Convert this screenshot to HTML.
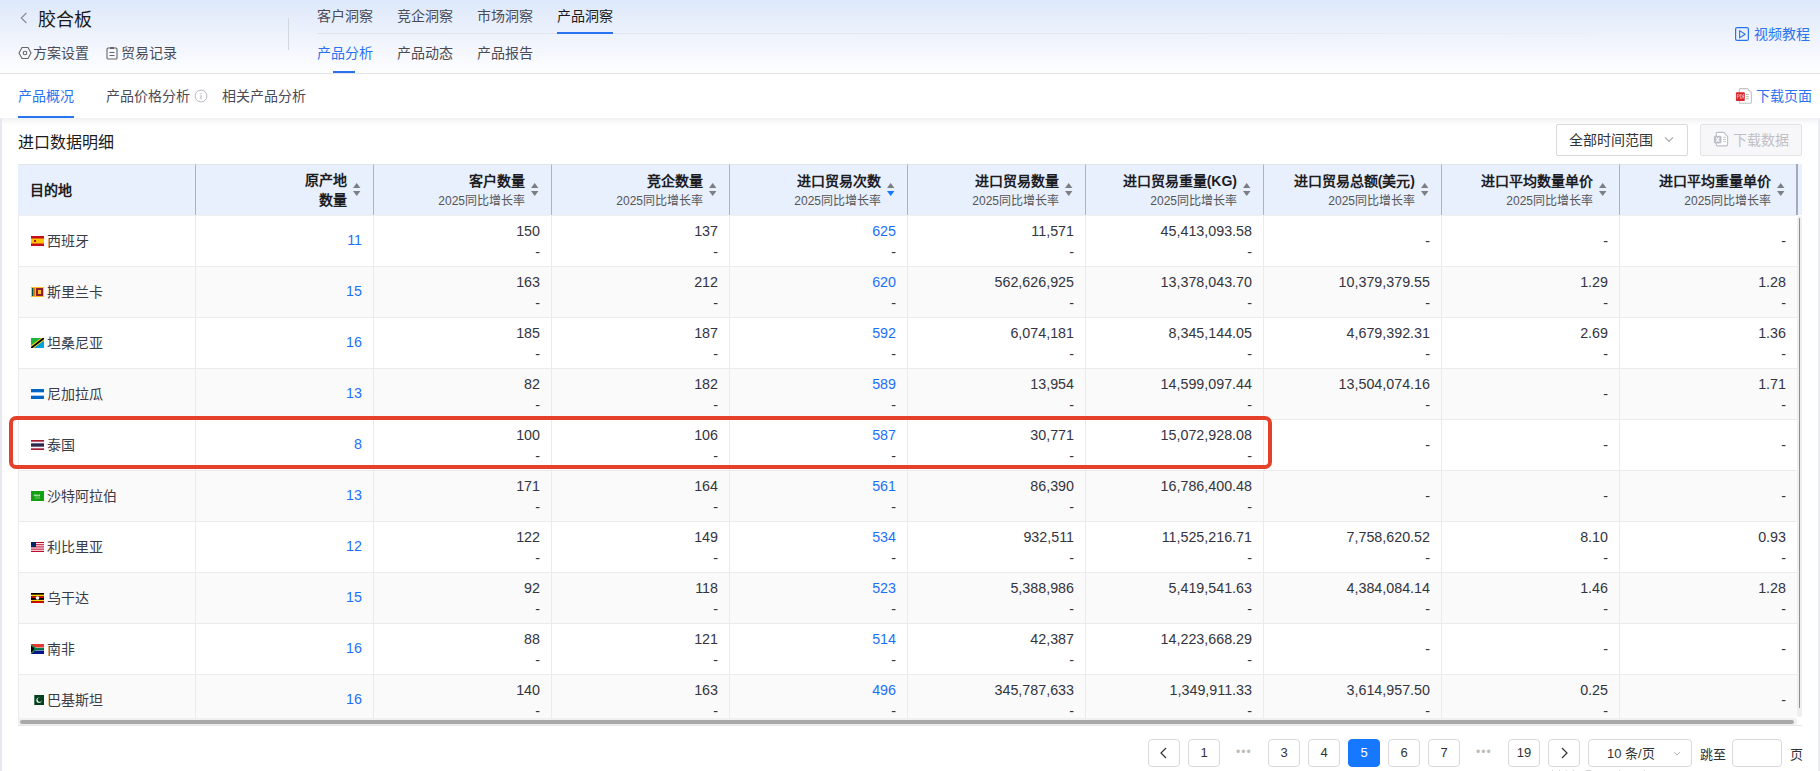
<!DOCTYPE html>
<html lang="zh-CN"><head><meta charset="utf-8"><title>胶合板</title>
<style>
*{box-sizing:border-box;margin:0;padding:0}
html,body{width:1820px;height:771px;overflow:hidden;background:#fff;font-family:"Liberation Sans",sans-serif;color:#333}
.abs{position:absolute;white-space:nowrap}
#top{position:absolute;left:0;top:0;width:1820px;height:74px;background:linear-gradient(#dce8fb 0px,#e5edfb 16px,#edf2fc 34px,#f6f8fe 54px,#fdfeff 73px);border-bottom:1px solid #e2e3e8}
.t14{font-size:14px;line-height:20px}
.nav{color:#4a4a56}
.blue{color:#2a73f0}
#strip-l{position:absolute;left:0;top:118px;width:2px;height:653px;background:#e8e9f0}
#strip-r{position:absolute;left:1818px;top:118px;width:2px;height:653px;background:#eceef3}
#shadow{position:absolute;left:2px;top:118px;width:1816px;height:7px;background:linear-gradient(#f0f1f3,#fbfbfc 75%,#fff)}
.th{position:absolute;top:164px;height:51px;background:#e8effd;border-left:1px solid #aeb3c0;border-top:1px solid #e2e5ec}
.hd{position:absolute;font-size:14px;font-weight:bold;color:#1d1d1f;line-height:20px;white-space:nowrap}
.sub{position:absolute;font-size:12px;color:#555;line-height:16px;white-space:nowrap}
.sort{position:absolute}
.row{position:absolute;left:18px;width:1779px;height:51px;border-bottom:1px solid #ebebeb}
.cell{position:absolute;top:0;height:51px;border-left:1px solid #ebebeb}
.v{position:absolute;font-size:14.3px;line-height:21px;white-space:nowrap;color:#34343e;text-align:right}
.nm{font-size:14px;color:#3a3c48}
.lnk{color:#1c70f8}
.pg{position:absolute;top:739px;width:32px;height:28px;border:1px solid #d9d9d9;border-radius:4px;background:#fff;font-size:13px;line-height:26px;text-align:center;color:#333}
</style></head><body>

<div id="top"></div>
<div style="position:absolute;left:317px;top:33px;width:1380px;height:1px;background:linear-gradient(90deg,#dfe3ee 0%,#e1e5ee 60%,rgba(230,233,240,0) 100%)"></div>
<svg class="abs" style="left:20px;top:12px" width="9" height="12" viewBox="0 0 9 12"><path d="M6.4 1L1.3 6L6.4 11" stroke="#868893" stroke-width="1.1" fill="none"/></svg>
<div class="abs" style="left:38px;top:7px;font-size:18px;line-height:26px;color:#1a1a1a">胶合板</div>
<svg class="abs" style="left:18px;top:46px" width="14" height="14" viewBox="0 0 14 14"><path d="M4 1.5H10L13 7L10 12.5H4L1 7Z" stroke="#666" stroke-width="1.1" fill="none"/><circle cx="7" cy="7" r="1.8" stroke="#666" stroke-width="1.1" fill="none"/></svg>
<div class="abs t14 nav" style="left:33px;top:43px">方案设置</div>
<svg class="abs" style="left:106px;top:46px" width="12" height="14" viewBox="0 0 12 14"><rect x="1" y="2" width="10" height="11" rx="1" stroke="#666" stroke-width="1.1" fill="none"/><path d="M4 1H8V3H4Z" fill="#666"/><path d="M3.5 6.5H8.5M3.5 9.5H8.5" stroke="#666" stroke-width="1.1"/></svg>
<div class="abs t14 nav" style="left:121px;top:43px">贸易记录</div>
<div style="position:absolute;left:288px;top:18px;width:1px;height:32px;background:#d3d6dd"></div>
<div class="abs t14" style="left:317px;top:6px;color:#4a4a56">客户洞察</div>
<div class="abs t14" style="left:397px;top:6px;color:#4a4a56">竞企洞察</div>
<div class="abs t14" style="left:477px;top:6px;color:#4a4a56">市场洞察</div>
<div class="abs t14" style="left:557px;top:6px;color:#1a1a1a">产品洞察</div>
<div style="position:absolute;left:557px;top:32px;width:56px;height:2px;background:#2a73f0"></div>
<div class="abs t14" style="left:317px;top:43px;color:#2a73f0">产品分析</div>
<div class="abs t14" style="left:397px;top:43px;color:#4a4a56">产品动态</div>
<div class="abs t14" style="left:477px;top:43px;color:#4a4a56">产品报告</div>
<div style="position:absolute;left:333px;top:71px;width:22px;height:2px;background:#2a73f0"></div>
<svg class="abs" style="left:1735px;top:27px" width="14" height="14" viewBox="0 0 14 14"><rect x="0.6" y="0.6" width="12.8" height="12.8" rx="1.5" stroke="#2a73f0" stroke-width="1.2" fill="none"/><path d="M4.6 3.6L10.2 7.2L4.6 10.8Z" stroke="#2a73f0" stroke-width="1.1" fill="none" stroke-linejoin="round"/></svg>
<div class="abs t14 blue" style="left:1754px;top:24px">视频教程</div>
<div class="abs t14 blue" style="left:18px;top:86px">产品概况</div>
<div style="position:absolute;left:18px;top:116px;width:56px;height:2px;background:#2a73f0"></div>
<div class="abs t14 nav" style="left:106px;top:86px">产品价格分析</div>
<svg class="abs" style="left:194px;top:89px" width="14" height="14" viewBox="0 0 14 14"><circle cx="7" cy="7" r="5.9" stroke="#b6b8c4" stroke-width="1" fill="none"/><path d="M7 6.2V10.2" stroke="#b6b8c4" stroke-width="1.1"/><path d="M7 4V5" stroke="#b6b8c4" stroke-width="1.1"/></svg>
<div class="abs t14 nav" style="left:222px;top:86px">相关产品分析</div>
<svg class="abs" style="left:1735px;top:88px" width="18" height="16" viewBox="0 0 18 16"><path d="M5.3 0.6H12.3L16.4 4.7V14.2Q16.4 15.2 15.4 15.2H5.3Q4.3 15.2 4.3 14.2V1.6Q4.3 0.6 5.3 0.6Z" fill="#fff" stroke="#c4c4c4" stroke-width="1.1"/><path d="M11 6.5H14M11 8.6H14M11 10.7H14" stroke="#b8b8b8" stroke-width="0.9"/><rect x="0.9" y="4.3" width="8.9" height="8.7" rx="1" fill="#d8252a"/><path d="M2.3 10.5V6.6H3.6Q4.4 6.6 4.4 7.5Q4.4 8.4 3.6 8.4H2.3M5.3 10.5V6.6H6.2Q7.3 6.6 7.3 8.5Q7.3 10.5 6.2 10.5ZM8.2 10.5V6.6H9M8.2 8.5H9" stroke="#fff" stroke-width="0.6" fill="none" opacity="0.85"/></svg>
<div class="abs t14 blue" style="left:1756px;top:86px">下载页面</div>
<div id="strip-l"></div><div id="strip-r"></div><div id="shadow"></div>
<div class="abs" style="left:18px;top:132px;font-size:16px;line-height:22px;color:#1a1a1a">进口数据明细</div>
<div style="position:absolute;left:1556px;top:124px;width:132px;height:32px;border:1px solid #d9d9d9;border-radius:2px;background:#fff"></div>
<div class="abs t14" style="left:1569px;top:130px;color:#333">全部时间范围</div>
<svg class="abs" style="left:1664px;top:136px" width="10" height="7" viewBox="0 0 10 7"><path d="M1 1.4L5 5.4L9 1.4" stroke="#aaa" stroke-width="1.3" fill="none"/></svg>
<div style="position:absolute;left:1700px;top:124px;width:102px;height:32px;border:1px solid #e3e3e6;border-radius:2px;background:#f7f7f9"></div>
<svg class="abs" style="left:1713px;top:131px" width="16" height="16" viewBox="0 0 16 16"><path d="M4.2 1.4H10.6L14.6 5.4V14Q14.6 14.9 13.7 14.9H4.2Q3.3 14.9 3.3 14V2.3Q3.3 1.4 4.2 1.4Z" fill="#fff" stroke="#bcbfca" stroke-width="1.1"/><path d="M10.1 6.3H12.9M10.1 8.5H12.9M10.1 10.6H12.9" stroke="#bcbfca" stroke-width="0.9"/><rect x="0.9" y="4.8" width="7.6" height="7.6" rx="1.3" fill="#bcbfca"/><path d="M3.2 6.6L6.3 10.7M6.3 6.6L3.2 10.7" stroke="#fff" stroke-width="1.1"/></svg>
<div class="abs t14" style="left:1733px;top:130px;color:#bfbfc4">下载数据</div>
<div class="th" style="left:18px;width:177px;border-left:none"></div>
<div class="th" style="left:195px;width:178px"></div>
<div class="th" style="left:373px;width:178px"></div>
<div class="th" style="left:551px;width:178px"></div>
<div class="th" style="left:729px;width:178px"></div>
<div class="th" style="left:907px;width:178px"></div>
<div class="th" style="left:1085px;width:178px"></div>
<div class="th" style="left:1263px;width:178px"></div>
<div class="th" style="left:1441px;width:178px"></div>
<div class="th" style="left:1619px;width:178px"></div>
<div style="position:absolute;left:1797px;top:164px;width:5px;height:51px;background:#e8effd"></div>
<div style="position:absolute;left:18px;top:215px;width:1779px;height:1px;background:#efefef"></div>
<div style="position:absolute;left:1796px;top:164px;width:2px;height:51px;background:#a6aab6"></div>
<div class="hd" style="left:30px;top:180px">目的地</div>
<div class="hd" style="left:305px;top:170px;width:42px;text-align:right">原产地</div>
<div class="hd" style="left:305px;top:190px;width:42px;text-align:right">数量</div>
<svg class="sort" style="left:353px;top:183px" width="8" height="13" viewBox="0 0 8 13"><path d="M3.7 0L7.4 5H0Z" fill="#7c7e84"/><path d="M0 8H7.4L3.7 13Z" fill="#7c7e84"/></svg>
<div class="hd" style="left:325px;top:171px;width:200px;text-align:right">客户数量</div>
<div class="sub" style="left:325px;top:193px;width:200px;text-align:right">2025同比增长率</div>
<svg class="sort" style="left:531px;top:183px" width="8" height="13" viewBox="0 0 8 13"><path d="M3.7 0L7.4 5H0Z" fill="#7c7e84"/><path d="M0 8H7.4L3.7 13Z" fill="#7c7e84"/></svg>
<div class="hd" style="left:503px;top:171px;width:200px;text-align:right">竞企数量</div>
<div class="sub" style="left:503px;top:193px;width:200px;text-align:right">2025同比增长率</div>
<svg class="sort" style="left:709px;top:183px" width="8" height="13" viewBox="0 0 8 13"><path d="M3.7 0L7.4 5H0Z" fill="#7c7e84"/><path d="M0 8H7.4L3.7 13Z" fill="#7c7e84"/></svg>
<div class="hd" style="left:681px;top:171px;width:200px;text-align:right">进口贸易次数</div>
<div class="sub" style="left:681px;top:193px;width:200px;text-align:right">2025同比增长率</div>
<svg class="sort" style="left:887px;top:183px" width="8" height="13" viewBox="0 0 8 13"><path d="M3.7 0L7.4 5H0Z" fill="#7c7e84"/><path d="M0 8H7.4L3.7 13Z" fill="#1677ff"/></svg>
<div class="hd" style="left:859px;top:171px;width:200px;text-align:right">进口贸易数量</div>
<div class="sub" style="left:859px;top:193px;width:200px;text-align:right">2025同比增长率</div>
<svg class="sort" style="left:1065px;top:183px" width="8" height="13" viewBox="0 0 8 13"><path d="M3.7 0L7.4 5H0Z" fill="#7c7e84"/><path d="M0 8H7.4L3.7 13Z" fill="#7c7e84"/></svg>
<div class="hd" style="left:1037px;top:171px;width:200px;text-align:right">进口贸易重量(KG)</div>
<div class="sub" style="left:1037px;top:193px;width:200px;text-align:right">2025同比增长率</div>
<svg class="sort" style="left:1243px;top:183px" width="8" height="13" viewBox="0 0 8 13"><path d="M3.7 0L7.4 5H0Z" fill="#7c7e84"/><path d="M0 8H7.4L3.7 13Z" fill="#7c7e84"/></svg>
<div class="hd" style="left:1215px;top:171px;width:200px;text-align:right">进口贸易总额(美元)</div>
<div class="sub" style="left:1215px;top:193px;width:200px;text-align:right">2025同比增长率</div>
<svg class="sort" style="left:1421px;top:183px" width="8" height="13" viewBox="0 0 8 13"><path d="M3.7 0L7.4 5H0Z" fill="#7c7e84"/><path d="M0 8H7.4L3.7 13Z" fill="#7c7e84"/></svg>
<div class="hd" style="left:1393px;top:171px;width:200px;text-align:right">进口平均数量单价</div>
<div class="sub" style="left:1393px;top:193px;width:200px;text-align:right">2025同比增长率</div>
<svg class="sort" style="left:1599px;top:183px" width="8" height="13" viewBox="0 0 8 13"><path d="M3.7 0L7.4 5H0Z" fill="#7c7e84"/><path d="M0 8H7.4L3.7 13Z" fill="#7c7e84"/></svg>
<div class="hd" style="left:1571px;top:171px;width:200px;text-align:right">进口平均重量单价</div>
<div class="sub" style="left:1571px;top:193px;width:200px;text-align:right">2025同比增长率</div>
<svg class="sort" style="left:1777px;top:183px" width="8" height="13" viewBox="0 0 8 13"><path d="M3.7 0L7.4 5H0Z" fill="#7c7e84"/><path d="M0 8H7.4L3.7 13Z" fill="#7c7e84"/></svg>
<div class="row" style="top:216px;background:#fff"></div>
<div style="position:absolute;left:195px;top:216px;width:1px;height:51px;background:#ebebeb"></div>
<div style="position:absolute;left:373px;top:216px;width:1px;height:51px;background:#ebebeb"></div>
<div style="position:absolute;left:551px;top:216px;width:1px;height:51px;background:#ebebeb"></div>
<div style="position:absolute;left:729px;top:216px;width:1px;height:51px;background:#ebebeb"></div>
<div style="position:absolute;left:907px;top:216px;width:1px;height:51px;background:#ebebeb"></div>
<div style="position:absolute;left:1085px;top:216px;width:1px;height:51px;background:#ebebeb"></div>
<div style="position:absolute;left:1263px;top:216px;width:1px;height:51px;background:#ebebeb"></div>
<div style="position:absolute;left:1441px;top:216px;width:1px;height:51px;background:#ebebeb"></div>
<div style="position:absolute;left:1619px;top:216px;width:1px;height:51px;background:#ebebeb"></div>
<div class="abs" style="left:31px;top:236px;line-height:0"><svg width="13" height="10"><rect width="13" height="10" fill="#c60b1e"/><rect y="2.5" width="13" height="5" fill="#ffc400"/><rect x="3" y="4" width="2" height="2" fill="#ad1519"/></svg></div>
<div class="v nm" style="left:47px;top:231px;text-align:left">西班牙</div>
<div class="v lnk" style="left:162px;width:200px;top:230px">11</div>
<div class="v" style="left:340px;width:200px;top:220.5px">150</div>
<div class="v" style="left:340px;width:200px;top:241.5px">-</div>
<div class="v" style="left:518px;width:200px;top:220.5px">137</div>
<div class="v" style="left:518px;width:200px;top:241.5px">-</div>
<div class="v lnk" style="left:696px;width:200px;top:220.5px">625</div>
<div class="v" style="left:696px;width:200px;top:241.5px">-</div>
<div class="v" style="left:874px;width:200px;top:220.5px">11,571</div>
<div class="v" style="left:874px;width:200px;top:241.5px">-</div>
<div class="v" style="left:1052px;width:200px;top:220.5px">45,413,093.58</div>
<div class="v" style="left:1052px;width:200px;top:241.5px">-</div>
<div class="v" style="left:1230px;width:200px;top:231px">-</div>
<div class="v" style="left:1408px;width:200px;top:231px">-</div>
<div class="v" style="left:1586px;width:200px;top:231px">-</div>
<div class="row" style="top:267px;background:#fafafa"></div>
<div style="position:absolute;left:195px;top:267px;width:1px;height:51px;background:#ebebeb"></div>
<div style="position:absolute;left:373px;top:267px;width:1px;height:51px;background:#ebebeb"></div>
<div style="position:absolute;left:551px;top:267px;width:1px;height:51px;background:#ebebeb"></div>
<div style="position:absolute;left:729px;top:267px;width:1px;height:51px;background:#ebebeb"></div>
<div style="position:absolute;left:907px;top:267px;width:1px;height:51px;background:#ebebeb"></div>
<div style="position:absolute;left:1085px;top:267px;width:1px;height:51px;background:#ebebeb"></div>
<div style="position:absolute;left:1263px;top:267px;width:1px;height:51px;background:#ebebeb"></div>
<div style="position:absolute;left:1441px;top:267px;width:1px;height:51px;background:#ebebeb"></div>
<div style="position:absolute;left:1619px;top:267px;width:1px;height:51px;background:#ebebeb"></div>
<div class="abs" style="left:31px;top:287px;line-height:0"><svg width="13" height="10"><rect width="13" height="10" fill="#ffbe29"/><rect x="1" y="1" width="1.5" height="8" fill="#00534e"/><rect x="2.5" y="1" width="1.5" height="8" fill="#eb7400"/><rect x="5" y="1" width="7" height="8" fill="#8d2029"/><rect x="7" y="3" width="3" height="4" fill="#ffbe29"/></svg></div>
<div class="v nm" style="left:47px;top:282px;text-align:left">斯里兰卡</div>
<div class="v lnk" style="left:162px;width:200px;top:281px">15</div>
<div class="v" style="left:340px;width:200px;top:271.5px">163</div>
<div class="v" style="left:340px;width:200px;top:292.5px">-</div>
<div class="v" style="left:518px;width:200px;top:271.5px">212</div>
<div class="v" style="left:518px;width:200px;top:292.5px">-</div>
<div class="v lnk" style="left:696px;width:200px;top:271.5px">620</div>
<div class="v" style="left:696px;width:200px;top:292.5px">-</div>
<div class="v" style="left:874px;width:200px;top:271.5px">562,626,925</div>
<div class="v" style="left:874px;width:200px;top:292.5px">-</div>
<div class="v" style="left:1052px;width:200px;top:271.5px">13,378,043.70</div>
<div class="v" style="left:1052px;width:200px;top:292.5px">-</div>
<div class="v" style="left:1230px;width:200px;top:271.5px">10,379,379.55</div>
<div class="v" style="left:1230px;width:200px;top:292.5px">-</div>
<div class="v" style="left:1408px;width:200px;top:271.5px">1.29</div>
<div class="v" style="left:1408px;width:200px;top:292.5px">-</div>
<div class="v" style="left:1586px;width:200px;top:271.5px">1.28</div>
<div class="v" style="left:1586px;width:200px;top:292.5px">-</div>
<div class="row" style="top:318px;background:#fff"></div>
<div style="position:absolute;left:195px;top:318px;width:1px;height:51px;background:#ebebeb"></div>
<div style="position:absolute;left:373px;top:318px;width:1px;height:51px;background:#ebebeb"></div>
<div style="position:absolute;left:551px;top:318px;width:1px;height:51px;background:#ebebeb"></div>
<div style="position:absolute;left:729px;top:318px;width:1px;height:51px;background:#ebebeb"></div>
<div style="position:absolute;left:907px;top:318px;width:1px;height:51px;background:#ebebeb"></div>
<div style="position:absolute;left:1085px;top:318px;width:1px;height:51px;background:#ebebeb"></div>
<div style="position:absolute;left:1263px;top:318px;width:1px;height:51px;background:#ebebeb"></div>
<div style="position:absolute;left:1441px;top:318px;width:1px;height:51px;background:#ebebeb"></div>
<div style="position:absolute;left:1619px;top:318px;width:1px;height:51px;background:#ebebeb"></div>
<div class="abs" style="left:31px;top:338px;line-height:0"><svg width="13" height="10"><rect width="13" height="10" fill="#1eb53a"/><path d="M13 0V10H0Z" fill="#00a3dd"/><path d="M0 10L0 7.5L10 0L13 0L13 2.5L3 10Z" fill="#fcd116"/><path d="M0 9L0 10L1.5 10L13 1.2L13 0L11.5 0Z" fill="#000"/></svg></div>
<div class="v nm" style="left:47px;top:333px;text-align:left">坦桑尼亚</div>
<div class="v lnk" style="left:162px;width:200px;top:332px">16</div>
<div class="v" style="left:340px;width:200px;top:322.5px">185</div>
<div class="v" style="left:340px;width:200px;top:343.5px">-</div>
<div class="v" style="left:518px;width:200px;top:322.5px">187</div>
<div class="v" style="left:518px;width:200px;top:343.5px">-</div>
<div class="v lnk" style="left:696px;width:200px;top:322.5px">592</div>
<div class="v" style="left:696px;width:200px;top:343.5px">-</div>
<div class="v" style="left:874px;width:200px;top:322.5px">6,074,181</div>
<div class="v" style="left:874px;width:200px;top:343.5px">-</div>
<div class="v" style="left:1052px;width:200px;top:322.5px">8,345,144.05</div>
<div class="v" style="left:1052px;width:200px;top:343.5px">-</div>
<div class="v" style="left:1230px;width:200px;top:322.5px">4,679,392.31</div>
<div class="v" style="left:1230px;width:200px;top:343.5px">-</div>
<div class="v" style="left:1408px;width:200px;top:322.5px">2.69</div>
<div class="v" style="left:1408px;width:200px;top:343.5px">-</div>
<div class="v" style="left:1586px;width:200px;top:322.5px">1.36</div>
<div class="v" style="left:1586px;width:200px;top:343.5px">-</div>
<div class="row" style="top:369px;background:#fafafa"></div>
<div style="position:absolute;left:195px;top:369px;width:1px;height:51px;background:#ebebeb"></div>
<div style="position:absolute;left:373px;top:369px;width:1px;height:51px;background:#ebebeb"></div>
<div style="position:absolute;left:551px;top:369px;width:1px;height:51px;background:#ebebeb"></div>
<div style="position:absolute;left:729px;top:369px;width:1px;height:51px;background:#ebebeb"></div>
<div style="position:absolute;left:907px;top:369px;width:1px;height:51px;background:#ebebeb"></div>
<div style="position:absolute;left:1085px;top:369px;width:1px;height:51px;background:#ebebeb"></div>
<div style="position:absolute;left:1263px;top:369px;width:1px;height:51px;background:#ebebeb"></div>
<div style="position:absolute;left:1441px;top:369px;width:1px;height:51px;background:#ebebeb"></div>
<div style="position:absolute;left:1619px;top:369px;width:1px;height:51px;background:#ebebeb"></div>
<div class="abs" style="left:31px;top:389px;line-height:0"><svg width="13" height="10"><rect width="13" height="10" fill="#0067c6"/><rect y="3.33" width="13" height="3.34" fill="#fff"/></svg></div>
<div class="v nm" style="left:47px;top:384px;text-align:left">尼加拉瓜</div>
<div class="v lnk" style="left:162px;width:200px;top:383px">13</div>
<div class="v" style="left:340px;width:200px;top:373.5px">82</div>
<div class="v" style="left:340px;width:200px;top:394.5px">-</div>
<div class="v" style="left:518px;width:200px;top:373.5px">182</div>
<div class="v" style="left:518px;width:200px;top:394.5px">-</div>
<div class="v lnk" style="left:696px;width:200px;top:373.5px">589</div>
<div class="v" style="left:696px;width:200px;top:394.5px">-</div>
<div class="v" style="left:874px;width:200px;top:373.5px">13,954</div>
<div class="v" style="left:874px;width:200px;top:394.5px">-</div>
<div class="v" style="left:1052px;width:200px;top:373.5px">14,599,097.44</div>
<div class="v" style="left:1052px;width:200px;top:394.5px">-</div>
<div class="v" style="left:1230px;width:200px;top:373.5px">13,504,074.16</div>
<div class="v" style="left:1230px;width:200px;top:394.5px">-</div>
<div class="v" style="left:1408px;width:200px;top:384px">-</div>
<div class="v" style="left:1586px;width:200px;top:373.5px">1.71</div>
<div class="v" style="left:1586px;width:200px;top:394.5px">-</div>
<div class="row" style="top:420px;background:#fff"></div>
<div style="position:absolute;left:195px;top:420px;width:1px;height:51px;background:#ebebeb"></div>
<div style="position:absolute;left:373px;top:420px;width:1px;height:51px;background:#ebebeb"></div>
<div style="position:absolute;left:551px;top:420px;width:1px;height:51px;background:#ebebeb"></div>
<div style="position:absolute;left:729px;top:420px;width:1px;height:51px;background:#ebebeb"></div>
<div style="position:absolute;left:907px;top:420px;width:1px;height:51px;background:#ebebeb"></div>
<div style="position:absolute;left:1085px;top:420px;width:1px;height:51px;background:#ebebeb"></div>
<div style="position:absolute;left:1263px;top:420px;width:1px;height:51px;background:#ebebeb"></div>
<div style="position:absolute;left:1441px;top:420px;width:1px;height:51px;background:#ebebeb"></div>
<div style="position:absolute;left:1619px;top:420px;width:1px;height:51px;background:#ebebeb"></div>
<div class="abs" style="left:31px;top:440px;line-height:0"><svg width="13" height="10"><rect width="13" height="10" fill="#a51931"/><rect y="1.67" width="13" height="6.66" fill="#f4f5f8"/><rect y="3.33" width="13" height="3.34" fill="#2d2a4a"/></svg></div>
<div class="v nm" style="left:47px;top:435px;text-align:left">泰国</div>
<div class="v lnk" style="left:162px;width:200px;top:434px">8</div>
<div class="v" style="left:340px;width:200px;top:424.5px">100</div>
<div class="v" style="left:340px;width:200px;top:445.5px">-</div>
<div class="v" style="left:518px;width:200px;top:424.5px">106</div>
<div class="v" style="left:518px;width:200px;top:445.5px">-</div>
<div class="v lnk" style="left:696px;width:200px;top:424.5px">587</div>
<div class="v" style="left:696px;width:200px;top:445.5px">-</div>
<div class="v" style="left:874px;width:200px;top:424.5px">30,771</div>
<div class="v" style="left:874px;width:200px;top:445.5px">-</div>
<div class="v" style="left:1052px;width:200px;top:424.5px">15,072,928.08</div>
<div class="v" style="left:1052px;width:200px;top:445.5px">-</div>
<div class="v" style="left:1230px;width:200px;top:435px">-</div>
<div class="v" style="left:1408px;width:200px;top:435px">-</div>
<div class="v" style="left:1586px;width:200px;top:435px">-</div>
<div class="row" style="top:471px;background:#fafafa"></div>
<div style="position:absolute;left:195px;top:471px;width:1px;height:51px;background:#ebebeb"></div>
<div style="position:absolute;left:373px;top:471px;width:1px;height:51px;background:#ebebeb"></div>
<div style="position:absolute;left:551px;top:471px;width:1px;height:51px;background:#ebebeb"></div>
<div style="position:absolute;left:729px;top:471px;width:1px;height:51px;background:#ebebeb"></div>
<div style="position:absolute;left:907px;top:471px;width:1px;height:51px;background:#ebebeb"></div>
<div style="position:absolute;left:1085px;top:471px;width:1px;height:51px;background:#ebebeb"></div>
<div style="position:absolute;left:1263px;top:471px;width:1px;height:51px;background:#ebebeb"></div>
<div style="position:absolute;left:1441px;top:471px;width:1px;height:51px;background:#ebebeb"></div>
<div style="position:absolute;left:1619px;top:471px;width:1px;height:51px;background:#ebebeb"></div>
<div class="abs" style="left:31px;top:491px;line-height:0"><svg width="13" height="10"><rect width="13" height="10" fill="#13a010"/><path d="M3.3 4.8V3.3M4.5 4.8V3.6M5.8 4.8V3.2M7 4.8V3.8M8.3 4.8V3.3M3.3 4.8H9" stroke="#cfeccf" stroke-width="0.8"/><path d="M4 7H9" stroke="#bfe3bf" stroke-width="0.6"/></svg></div>
<div class="v nm" style="left:47px;top:486px;text-align:left">沙特阿拉伯</div>
<div class="v lnk" style="left:162px;width:200px;top:485px">13</div>
<div class="v" style="left:340px;width:200px;top:475.5px">171</div>
<div class="v" style="left:340px;width:200px;top:496.5px">-</div>
<div class="v" style="left:518px;width:200px;top:475.5px">164</div>
<div class="v" style="left:518px;width:200px;top:496.5px">-</div>
<div class="v lnk" style="left:696px;width:200px;top:475.5px">561</div>
<div class="v" style="left:696px;width:200px;top:496.5px">-</div>
<div class="v" style="left:874px;width:200px;top:475.5px">86,390</div>
<div class="v" style="left:874px;width:200px;top:496.5px">-</div>
<div class="v" style="left:1052px;width:200px;top:475.5px">16,786,400.48</div>
<div class="v" style="left:1052px;width:200px;top:496.5px">-</div>
<div class="v" style="left:1230px;width:200px;top:486px">-</div>
<div class="v" style="left:1408px;width:200px;top:486px">-</div>
<div class="v" style="left:1586px;width:200px;top:486px">-</div>
<div class="row" style="top:522px;background:#fff"></div>
<div style="position:absolute;left:195px;top:522px;width:1px;height:51px;background:#ebebeb"></div>
<div style="position:absolute;left:373px;top:522px;width:1px;height:51px;background:#ebebeb"></div>
<div style="position:absolute;left:551px;top:522px;width:1px;height:51px;background:#ebebeb"></div>
<div style="position:absolute;left:729px;top:522px;width:1px;height:51px;background:#ebebeb"></div>
<div style="position:absolute;left:907px;top:522px;width:1px;height:51px;background:#ebebeb"></div>
<div style="position:absolute;left:1085px;top:522px;width:1px;height:51px;background:#ebebeb"></div>
<div style="position:absolute;left:1263px;top:522px;width:1px;height:51px;background:#ebebeb"></div>
<div style="position:absolute;left:1441px;top:522px;width:1px;height:51px;background:#ebebeb"></div>
<div style="position:absolute;left:1619px;top:522px;width:1px;height:51px;background:#ebebeb"></div>
<div class="abs" style="left:31px;top:542px;line-height:0"><svg width="13" height="10"><rect width="13" height="10" fill="#fff"/><rect y="0" width="13" height="1.1" fill="#bf0a30"/><rect y="2.2" width="13" height="1.1" fill="#bf0a30"/><rect y="4.4" width="13" height="1.1" fill="#bf0a30"/><rect y="6.6" width="13" height="1.1" fill="#bf0a30"/><rect y="8.8" width="13" height="1.2" fill="#bf0a30"/><rect width="5" height="5" fill="#002868"/></svg></div>
<div class="v nm" style="left:47px;top:537px;text-align:left">利比里亚</div>
<div class="v lnk" style="left:162px;width:200px;top:536px">12</div>
<div class="v" style="left:340px;width:200px;top:526.5px">122</div>
<div class="v" style="left:340px;width:200px;top:547.5px">-</div>
<div class="v" style="left:518px;width:200px;top:526.5px">149</div>
<div class="v" style="left:518px;width:200px;top:547.5px">-</div>
<div class="v lnk" style="left:696px;width:200px;top:526.5px">534</div>
<div class="v" style="left:696px;width:200px;top:547.5px">-</div>
<div class="v" style="left:874px;width:200px;top:526.5px">932,511</div>
<div class="v" style="left:874px;width:200px;top:547.5px">-</div>
<div class="v" style="left:1052px;width:200px;top:526.5px">11,525,216.71</div>
<div class="v" style="left:1052px;width:200px;top:547.5px">-</div>
<div class="v" style="left:1230px;width:200px;top:526.5px">7,758,620.52</div>
<div class="v" style="left:1230px;width:200px;top:547.5px">-</div>
<div class="v" style="left:1408px;width:200px;top:526.5px">8.10</div>
<div class="v" style="left:1408px;width:200px;top:547.5px">-</div>
<div class="v" style="left:1586px;width:200px;top:526.5px">0.93</div>
<div class="v" style="left:1586px;width:200px;top:547.5px">-</div>
<div class="row" style="top:573px;background:#fafafa"></div>
<div style="position:absolute;left:195px;top:573px;width:1px;height:51px;background:#ebebeb"></div>
<div style="position:absolute;left:373px;top:573px;width:1px;height:51px;background:#ebebeb"></div>
<div style="position:absolute;left:551px;top:573px;width:1px;height:51px;background:#ebebeb"></div>
<div style="position:absolute;left:729px;top:573px;width:1px;height:51px;background:#ebebeb"></div>
<div style="position:absolute;left:907px;top:573px;width:1px;height:51px;background:#ebebeb"></div>
<div style="position:absolute;left:1085px;top:573px;width:1px;height:51px;background:#ebebeb"></div>
<div style="position:absolute;left:1263px;top:573px;width:1px;height:51px;background:#ebebeb"></div>
<div style="position:absolute;left:1441px;top:573px;width:1px;height:51px;background:#ebebeb"></div>
<div style="position:absolute;left:1619px;top:573px;width:1px;height:51px;background:#ebebeb"></div>
<div class="abs" style="left:31px;top:593px;line-height:0"><svg width="13" height="10"><rect width="13" height="10" fill="#000"/><rect y="1.67" width="13" height="1.67" fill="#fcdc04"/><rect y="3.33" width="13" height="1.67" fill="#d90000"/><rect y="6.67" width="13" height="1.67" fill="#fcdc04"/><rect y="5" width="13" height="1.67" fill="#000"/><rect y="8.33" width="13" height="1.67" fill="#d90000"/><circle cx="6.5" cy="5" r="1.8" fill="#fff"/></svg></div>
<div class="v nm" style="left:47px;top:588px;text-align:left">乌干达</div>
<div class="v lnk" style="left:162px;width:200px;top:587px">15</div>
<div class="v" style="left:340px;width:200px;top:577.5px">92</div>
<div class="v" style="left:340px;width:200px;top:598.5px">-</div>
<div class="v" style="left:518px;width:200px;top:577.5px">118</div>
<div class="v" style="left:518px;width:200px;top:598.5px">-</div>
<div class="v lnk" style="left:696px;width:200px;top:577.5px">523</div>
<div class="v" style="left:696px;width:200px;top:598.5px">-</div>
<div class="v" style="left:874px;width:200px;top:577.5px">5,388,986</div>
<div class="v" style="left:874px;width:200px;top:598.5px">-</div>
<div class="v" style="left:1052px;width:200px;top:577.5px">5,419,541.63</div>
<div class="v" style="left:1052px;width:200px;top:598.5px">-</div>
<div class="v" style="left:1230px;width:200px;top:577.5px">4,384,084.14</div>
<div class="v" style="left:1230px;width:200px;top:598.5px">-</div>
<div class="v" style="left:1408px;width:200px;top:577.5px">1.46</div>
<div class="v" style="left:1408px;width:200px;top:598.5px">-</div>
<div class="v" style="left:1586px;width:200px;top:577.5px">1.28</div>
<div class="v" style="left:1586px;width:200px;top:598.5px">-</div>
<div class="row" style="top:624px;background:#fff"></div>
<div style="position:absolute;left:195px;top:624px;width:1px;height:51px;background:#ebebeb"></div>
<div style="position:absolute;left:373px;top:624px;width:1px;height:51px;background:#ebebeb"></div>
<div style="position:absolute;left:551px;top:624px;width:1px;height:51px;background:#ebebeb"></div>
<div style="position:absolute;left:729px;top:624px;width:1px;height:51px;background:#ebebeb"></div>
<div style="position:absolute;left:907px;top:624px;width:1px;height:51px;background:#ebebeb"></div>
<div style="position:absolute;left:1085px;top:624px;width:1px;height:51px;background:#ebebeb"></div>
<div style="position:absolute;left:1263px;top:624px;width:1px;height:51px;background:#ebebeb"></div>
<div style="position:absolute;left:1441px;top:624px;width:1px;height:51px;background:#ebebeb"></div>
<div style="position:absolute;left:1619px;top:624px;width:1px;height:51px;background:#ebebeb"></div>
<div class="abs" style="left:31px;top:644px;line-height:0"><svg width="13" height="10"><rect width="13" height="10" fill="#fff"/><rect width="13" height="3.5" fill="#e03c31"/><rect y="6.5" width="13" height="3.5" fill="#001489"/><path d="M0 0L6 5L0 10Z" fill="#ffb81c"/><path d="M0 1.5L4.5 5L0 8.5Z" fill="#000"/><path d="M3 5L13 5" stroke="#007749" stroke-width="2.2"/><path d="M0 0.8L5.2 5L0 9.2" stroke="#007749" stroke-width="1.2" fill="none"/></svg></div>
<div class="v nm" style="left:47px;top:639px;text-align:left">南非</div>
<div class="v lnk" style="left:162px;width:200px;top:638px">16</div>
<div class="v" style="left:340px;width:200px;top:628.5px">88</div>
<div class="v" style="left:340px;width:200px;top:649.5px">-</div>
<div class="v" style="left:518px;width:200px;top:628.5px">121</div>
<div class="v" style="left:518px;width:200px;top:649.5px">-</div>
<div class="v lnk" style="left:696px;width:200px;top:628.5px">514</div>
<div class="v" style="left:696px;width:200px;top:649.5px">-</div>
<div class="v" style="left:874px;width:200px;top:628.5px">42,387</div>
<div class="v" style="left:874px;width:200px;top:649.5px">-</div>
<div class="v" style="left:1052px;width:200px;top:628.5px">14,223,668.29</div>
<div class="v" style="left:1052px;width:200px;top:649.5px">-</div>
<div class="v" style="left:1230px;width:200px;top:639px">-</div>
<div class="v" style="left:1408px;width:200px;top:639px">-</div>
<div class="v" style="left:1586px;width:200px;top:639px">-</div>
<div class="row" style="top:675px;background:#fafafa"></div>
<div style="position:absolute;left:195px;top:675px;width:1px;height:51px;background:#ebebeb"></div>
<div style="position:absolute;left:373px;top:675px;width:1px;height:51px;background:#ebebeb"></div>
<div style="position:absolute;left:551px;top:675px;width:1px;height:51px;background:#ebebeb"></div>
<div style="position:absolute;left:729px;top:675px;width:1px;height:51px;background:#ebebeb"></div>
<div style="position:absolute;left:907px;top:675px;width:1px;height:51px;background:#ebebeb"></div>
<div style="position:absolute;left:1085px;top:675px;width:1px;height:51px;background:#ebebeb"></div>
<div style="position:absolute;left:1263px;top:675px;width:1px;height:51px;background:#ebebeb"></div>
<div style="position:absolute;left:1441px;top:675px;width:1px;height:51px;background:#ebebeb"></div>
<div style="position:absolute;left:1619px;top:675px;width:1px;height:51px;background:#ebebeb"></div>
<div class="abs" style="left:31px;top:695px;line-height:0"><svg width="13" height="10"><rect width="13" height="10" fill="#fff"/><rect x="3.3" width="9.7" height="10" fill="#01411c"/><circle cx="8" cy="5.2" r="2.6" fill="#fff"/><circle cx="8.8" cy="4.6" r="2.3" fill="#01411c"/></svg></div>
<div class="v nm" style="left:47px;top:690px;text-align:left">巴基斯坦</div>
<div class="v lnk" style="left:162px;width:200px;top:689px">16</div>
<div class="v" style="left:340px;width:200px;top:679.5px">140</div>
<div class="v" style="left:340px;width:200px;top:700.5px">-</div>
<div class="v" style="left:518px;width:200px;top:679.5px">163</div>
<div class="v" style="left:518px;width:200px;top:700.5px">-</div>
<div class="v lnk" style="left:696px;width:200px;top:679.5px">496</div>
<div class="v" style="left:696px;width:200px;top:700.5px">-</div>
<div class="v" style="left:874px;width:200px;top:679.5px">345,787,633</div>
<div class="v" style="left:874px;width:200px;top:700.5px">-</div>
<div class="v" style="left:1052px;width:200px;top:679.5px">1,349,911.33</div>
<div class="v" style="left:1052px;width:200px;top:700.5px">-</div>
<div class="v" style="left:1230px;width:200px;top:679.5px">3,614,957.50</div>
<div class="v" style="left:1230px;width:200px;top:700.5px">-</div>
<div class="v" style="left:1408px;width:200px;top:679.5px">0.25</div>
<div class="v" style="left:1408px;width:200px;top:700.5px">-</div>
<div class="v" style="left:1586px;width:200px;top:690px">-</div>
<div style="position:absolute;left:18px;top:215px;width:1px;height:511px;background:#ebebeb"></div>
<div style="position:absolute;left:18px;top:718px;width:1779px;height:7px;background:#f0f0f0;border-radius:0 4px 4px 0"></div>
<div style="position:absolute;left:18px;top:725px;width:1784px;height:1px;background:#e6e6e6"></div>
<div style="position:absolute;left:20px;top:720px;width:1774px;height:4px;border-radius:2px;background:#a9a9a9"></div>
<div style="position:absolute;left:1797px;top:216px;width:5px;height:501px;background:#efefef;border-radius:3px"></div>
<div style="position:absolute;left:1798.9px;top:218px;width:1.4px;height:490px;border-radius:1px;background:#8f8f8f"></div>
<div style="position:absolute;left:9px;top:416px;width:1263px;height:53px;border:4px solid #e5402a;border-radius:7px"></div>
<div class="pg" style="left:1148px"><svg width="10" height="12" viewBox="0 0 10 12" style="margin-top:7px"><path d="M7 1L2 6L7 11" stroke="#333" stroke-width="1.2" fill="none"/></svg></div>
<div class="pg" style="left:1188px">1</div>
<div class="abs" style="left:1236px;top:745px;font-size:12px;color:#bbb;letter-spacing:1px">•••</div>
<div class="pg" style="left:1268px">3</div>
<div class="pg" style="left:1308px">4</div>
<div class="pg" style="left:1348px;background:#1677ff;border-color:#1677ff;color:#fff">5</div>
<div class="pg" style="left:1388px">6</div>
<div class="pg" style="left:1428px">7</div>
<div class="abs" style="left:1476px;top:745px;font-size:12px;color:#bbb;letter-spacing:1px">•••</div>
<div class="pg" style="left:1508px">19</div>
<div class="pg" style="left:1548px"><svg width="10" height="12" viewBox="0 0 10 12" style="margin-top:7px"><path d="M3 1L8 6L3 11" stroke="#333" stroke-width="1.2" fill="none"/></svg></div>
<div style="position:absolute;left:1588px;top:739px;width:104px;height:28px;border:1px solid #d9d9d9;border-radius:4px;background:#fff"></div>
<div class="abs" style="left:1607px;top:744px;font-size:13px;line-height:20px;color:#333">10 条/页</div>
<svg class="abs" style="left:1673px;top:751px" width="8" height="6" viewBox="0 0 8 6"><path d="M1 1L4 4L7 1" stroke="#bbb" fill="none"/></svg>
<div class="abs" style="left:1700px;top:745px;font-size:13px;line-height:20px;color:#333">跳至</div>
<div style="position:absolute;left:1732px;top:739px;width:50px;height:28px;border:1px solid #d9d9d9;border-radius:4px;background:#fff"></div>
<div class="abs" style="left:1790px;top:745px;font-size:13px;line-height:20px;color:#333">页</div>
<div style="position:absolute;left:1552px;top:770px;width:1px;height:1px;background:#d0d0d0"></div>
<div style="position:absolute;left:1559px;top:770px;width:1px;height:1px;background:#d0d0d0"></div>
<div style="position:absolute;left:1566px;top:770px;width:1px;height:1px;background:#d0d0d0"></div>
<div style="position:absolute;left:1573px;top:770px;width:1px;height:1px;background:#d0d0d0"></div>
<div style="position:absolute;left:1586px;top:770px;width:5px;height:1px;background:#d0d0d0"></div>
<div style="position:absolute;left:1619px;top:770px;width:1px;height:1px;background:#d0d0d0"></div>
<div style="position:absolute;left:1644px;top:770px;width:1px;height:1px;background:#d0d0d0"></div>
</body></html>
